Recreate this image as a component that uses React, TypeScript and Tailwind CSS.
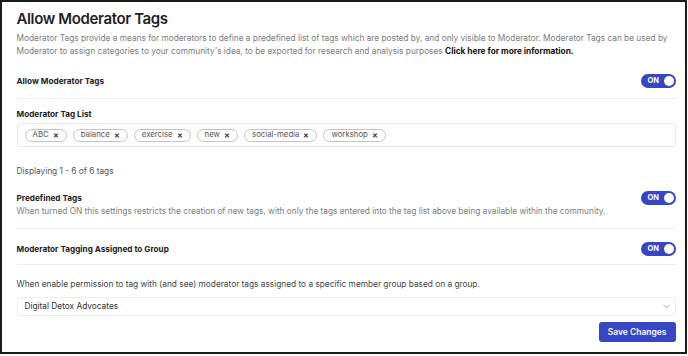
import { ChevronDown } from 'lucide-react'

const tags = ['ABC', 'balance', 'exercise', 'new', 'social-media', 'workshop']

function Toggle() {
  return (
    <div className="flex h-[14px] w-[35px] items-center justify-between rounded-full bg-[#3646c4] pl-[7px] pr-[2px]">
      <span className="text-[7.5px] font-bold leading-none text-white">ON</span>
      <span className="h-[10px] w-[10px] rounded-full bg-white" />
    </div>
  )
}

export default function App() {
  return (
    <div className="h-[356px] w-[688px] bg-white">
      <div
        className="h-[354px] w-[687px] overflow-hidden border-[2.5px] border-[#1c1c1c] text-[#222]"
        style={{ fontFamily: 'Inter, "Noto Sans", sans-serif' }}
      >
        <div className="pl-[14.5px] pr-[9.5px] pt-[7px]">
          <h1 className="text-[15px] font-semibold leading-[20px] tracking-tight text-[#1f1f1f]">Allow Moderator Tags</h1>
          <p className="mt-[3px] text-[8.3px] leading-[13px] text-[#7c7c7c]">
            Moderator Tags provide a means for moderators to define a predefined list of tags which are posted by, and only visible to Moderator. Moderator Tags can be used by Moderator to assign categories to your community's idea, to be exported for research and analysis purposes{' '}
            <span className="font-bold text-[#111]">Click here for more information.</span>
          </p>

          <div className="mt-[16px] flex items-center justify-between border-b border-[#ececec] pb-[10px]">
            <span className="text-[8.2px] font-bold text-[#222]">Allow Moderator Tags</span>
            <Toggle />
          </div>

          <div className="mt-[9px] text-[8.2px] font-bold leading-[12px] text-[#222]">Moderator Tag List</div>
          <div className="mt-[3px] flex h-[24px] items-center gap-[6px] rounded-[3px] border border-[#e8e8e8] px-[7px]">
            {tags.map((t) => (
              <span
                key={t}
                className="flex h-[13px] items-center gap-[4px] rounded-full border border-[#c4c4c4] px-[7px] text-[7.8px] leading-none text-[#555]"
              >
                {t}
                <span className="text-[7px] font-semibold text-[#333]">✕</span>
              </span>
            ))}
          </div>

          <div className="mt-[18px] text-[8.3px] leading-[12px] text-[#555]">Displaying 1 - 6 of 6 tags</div>

          <div className="mt-[14px] border-b border-[#ececec] pb-[11px]">
            <div className="flex h-[14px] items-center justify-between">
              <span className="text-[8.2px] font-bold text-[#222]">Predefined Tags</span>
              <Toggle />
            </div>
            <p className="text-[8.3px] leading-[12px] text-[#7c7c7c]">
              When turned ON this settings restricts the creation of new tags, with only the tags entered into the tag list above being available within the community.
            </p>
          </div>

          <div className="mt-[13px] flex items-center justify-between border-b border-[#ececec] pb-[8px]">
            <span className="text-[8.2px] font-bold text-[#222]">Moderator Tagging Assigned to Group</span>
            <Toggle />
          </div>

          <p className="mt-[13px] text-[8.3px] leading-[12px] text-[#444]">
            When enable permission to tag with (and see) moderator tags assigned to a specific member group based on a group.
          </p>

          <div className="mt-[7px] flex h-[19px] items-center justify-between rounded-[3px] border border-[#ececec] pl-[7px] pr-[3px]">
            <span className="text-[8.3px] text-[#333]">Digital Detox Advocates</span>
            <ChevronDown size={11} strokeWidth={1.5} className="text-[#777]" />
          </div>

          <div className="mt-[6px] flex justify-end">
            <button className="h-[20px] rounded-[3px] bg-[#3646c4] px-[9px] text-[8.5px] font-semibold text-white">
              Save Changes
            </button>
          </div>
        </div>
      </div>
    </div>
  )
}
